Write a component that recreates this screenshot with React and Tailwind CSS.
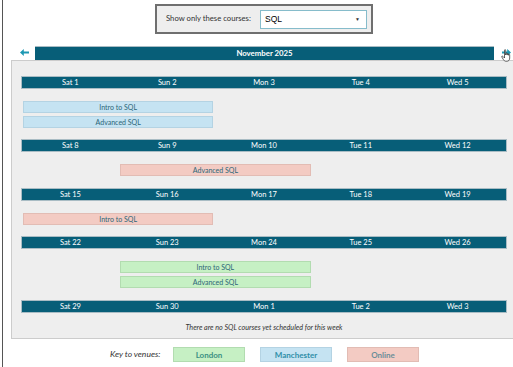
import React from "react";

const weeks = [
  { days: ["Sat 1", "Sun 2", "Mon 3", "Tue 4", "Wed 5"], pb: "pb-[11px]", bars: [
    { t: "Intro to SQL", c: "blue", s: 1 },
    { t: "Advanced SQL", c: "blue", s: 1 },
  ] },
  { days: ["Sat 8", "Sun 9", "Mon 10", "Tue 11", "Wed 12"], pb: "pb-[12px]", bars: [
    { t: "Advanced SQL", c: "pink", s: 2 },
  ] },
  { days: ["Sat 15", "Sun 16", "Mon 17", "Tue 18", "Wed 19"], pb: "pb-[11px]", bars: [
    { t: "Intro to SQL", c: "pink", s: 1 },
  ] },
  { days: ["Sat 22", "Sun 23", "Mon 24", "Tue 25", "Wed 26"], pb: "pb-[12px]", bars: [
    { t: "Intro to SQL", c: "green", s: 2 },
    { t: "Advanced SQL", c: "green", s: 2 },
  ] },
  { days: ["Sat 29", "Sun 30", "Mon 1", "Tue 2", "Wed 3"], bars: [], empty: true },
];

const barColor = {
  blue: "bg-[#c5e3f2] border-[#b4d3e3]",
  pink: "bg-[#f3cbc3] border-[#e2bcb4]",
  green: "bg-[#c6f0c4] border-[#b2dcb0]",
};

function Bar({ b }) {
  return (
    <div className="grid grid-cols-5">
      <div
        className={`${b.s === 1 ? "col-start-1" : "col-start-2"} col-span-2 mx-[2px] h-[12px] border ${barColor[b.c]} flex items-center justify-center text-[7px] leading-none text-[#2b6678]`}
      >
        {b.t}
      </div>
    </div>
  );
}

function Week({ w }) {
  return (
    <div className="flex flex-col">
      <div className="grid grid-cols-5 h-[13px] bg-[#075e78] border border-[#a9bcc4] items-center">
        {w.days.map((d) => (
          <div key={d} className="text-center text-white text-[7.5px] leading-none">
            {d}
          </div>
        ))}
      </div>
      {w.empty ? (
        <div className="pt-[10px] pb-[5px] text-center text-[7.2px] italic text-[#333] leading-[10px]">
          There are no SQL courses yet scheduled for this week
        </div>
      ) : (
        <div className={`flex flex-col gap-[3px] pt-[12px] ${w.pb}`}>
          {w.bars.map((b, i) => (
            <Bar key={i} b={b} />
          ))}
        </div>
      )}
    </div>
  );
}

function Arrow({ dir }) {
  return (
    <svg width="9" height="7" viewBox="0 0 9 7" className={dir === "right" ? "rotate-180" : ""}>
      <path d="M0 3.5 L3.8 0 L3.8 2.4 L9 2.4 L9 4.6 L3.8 4.6 L3.8 7 Z" fill="#1d98b3" />
    </svg>
  );
}

function Hand() {
  return (
    <svg width="11" height="13" viewBox="0 0 11 13">
      <path
        d="M3.5 1.2 C3.5 0.5 4.7 0.5 4.7 1.2 L4.7 6 L4.9 4.6 C5 4 6.1 4 6.1 4.7 L6.1 6 L6.3 5 C6.4 4.4 7.4 4.4 7.4 5.1 L7.4 6.3 L7.6 5.6 C7.7 5.1 8.7 5.1 8.7 5.8 L8.7 9 C8.7 10.8 7.7 12.2 6 12.2 L4.8 12.2 C3.6 12.2 3 11.5 2.4 10.6 L0.8 8 C0.4 7.4 1.2 6.7 1.8 7.3 L3.5 9 Z"
        fill="#fff"
        stroke="#222"
        strokeWidth="0.7"
      />
    </svg>
  );
}

export default function App() {
  return (
    <div
      className="w-[513px] h-[367px] overflow-hidden bg-white pl-[2px]"
      style={{ fontFamily: "Lato, 'Noto Sans', sans-serif" }}
    >
      <div className="h-full border-l border-[#555] flex flex-col">
        {/* filter box */}
        <div className="pt-[4px] pl-[152px]">
          <div className="w-[218px] h-[30px] border-2 border-[#6f6f6f] bg-[#eeeeee] flex items-center pl-[9px]">
            <span className="w-[94px] text-[7.7px] text-[#333] leading-none whitespace-nowrap">Show only these courses:</span>
            <div
              className="w-[107px] h-[19px] shrink-0 bg-white border border-[#86bccb] flex items-center justify-between pl-[4px] pr-[6px]"
              style={{ fontFamily: "'Liberation Sans', Arial, sans-serif" }}
            >
              <span className="text-[8.5px] text-black leading-none">SQL</span>
              <span className="text-[5px] text-[#333] leading-none">▼</span>
            </div>
          </div>
        </div>

        {/* month header row */}
        <div className="mt-[12px] flex items-end h-[14px]">
          <div className="w-[32px] flex justify-end pr-[6px] pb-[4px]">
            <Arrow dir="left" />
          </div>
          <div className="w-[459px] h-[14px] bg-[#075e78] border-t border-[#a9bcc4] flex items-center justify-center text-white text-[7.8px] font-bold leading-none">
            November 2025
          </div>
          <div className="relative flex-1 flex justify-center pb-[4px] pl-[6px]">
            <Arrow dir="right" />
            <div className="absolute left-[7px] top-[0px]">
              <Hand />
            </div>
          </div>
        </div>

        {/* calendar panel */}
        <div className="ml-[8px] w-[504px] border border-[#cccccc] bg-[#eeeeee] pt-[15px] pl-[9px] pr-[7px] flex flex-col">
          {weeks.map((w, i) => (
            <Week key={i} w={w} />
          ))}
        </div>

        {/* key */}
        <div className="flex items-center mt-[8px] pl-[107px]">
          <span className="text-[8.5px] italic text-[#333] leading-none w-[63px]">Key to venues:</span>
          <div className="flex gap-[15px]">
            <div className="w-[72px] h-[15px] bg-[#c6f0c4] border border-[#b2dcb0] flex items-center justify-center text-[8px] font-bold text-[#3b9183] leading-none">
              London
            </div>
            <div className="w-[72px] h-[15px] bg-[#c5e3f2] border border-[#b4d3e3] flex items-center justify-center text-[8px] font-bold text-[#2f8ea8] leading-none">
              Manchester
            </div>
            <div className="w-[72px] h-[15px] bg-[#f3cbc3] border border-[#e2bcb4] flex items-center justify-center text-[8px] font-bold text-[#6b8e99] leading-none">
              Online
            </div>
          </div>
        </div>
      </div>
    </div>
  );
}
